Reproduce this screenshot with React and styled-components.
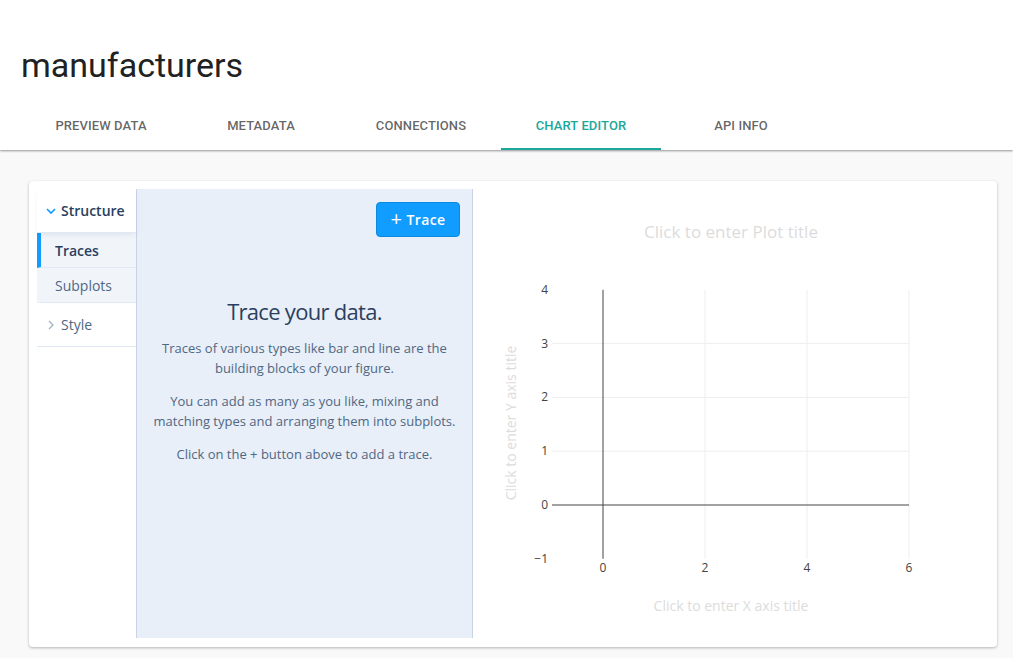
import React from "react";
import styled, { createGlobalStyle } from "styled-components";

const GlobalStyle = createGlobalStyle`
  html, body {
    margin: 0;
    padding: 0;
    background: #f9f9f9;
    font-family: Roboto, "Liberation Sans", sans-serif;
  }
  * {
    box-sizing: border-box;
  }
`;

const tabs = ["Preview Data", "Metadata", "Connections", "Chart Editor", "API Info"];
const activeTab = 3;

const App = () => {
  return (
    <Page>
      <GlobalStyle />
      <Header>
        <Title>manufacturers</Title>
        <TabBar>
          {tabs.map((t, i) => (
            <Tab key={t} $active={i === activeTab}>
              {t}
            </Tab>
          ))}
        </TabBar>
      </Header>
      <Content>
        <Card>
          <Sidebar>
            <GroupHeader $open>
              <svg width="12" height="8" viewBox="0 0 12 8">
                <polyline
                  points="2,2 6,6 10,2"
                  fill="none"
                  stroke="#119dff"
                  strokeWidth="1.7"
                />
              </svg>
              Structure
            </GroupHeader>
            <NavItem $active>Traces</NavItem>
            <NavItem>Subplots</NavItem>
            <GroupHeader>
              <svg width="12" height="12" viewBox="0 0 12 12">
                <polyline
                  points="4,2 8,6 4,10"
                  fill="none"
                  stroke="#a2b1c6"
                  strokeWidth="1.3"
                />
              </svg>
              Style
            </GroupHeader>
          </Sidebar>
          <Panel>
            <PanelTop>
              <AddButton>
                <span>+</span> Trace
              </AddButton>
            </PanelTop>
            <Empty>
              <EmptyTitle>Trace your data.</EmptyTitle>
              <EmptyText>
                Traces of various types like bar and line are the building
                blocks of your figure.
              </EmptyText>
              <EmptyText>
                You can add as many as you like, mixing and matching types and
                arranging them into subplots.
              </EmptyText>
              <EmptyText>Click on the + button above to add a trace.</EmptyText>
            </Empty>
          </Panel>
          <PlotArea>
            <Chart />
          </PlotArea>
        </Card>
      </Content>
    </Page>
  );
};

const xs = [0, 2, 4, 6];
const ys = [4, 3, 2, 1, 0, -1];
const xPos = (v) => 130 + v * 51;
const yPos = (v) => 316 - v * 53.8;

const Chart = () => (
  <svg width="516" height="449" viewBox="0 0 516 449">
    <g fontFamily="'Open Sans', sans-serif">
      <text x="258" y="49" textAnchor="middle" fontSize="17" fill="#dcdcdc">
        Click to enter Plot title
      </text>
      {[1, 2, 3].map((v) => (
        <line key={v} x1="79" x2="436" y1={yPos(v)} y2={yPos(v)} stroke="#eee" />
      ))}
      {[2, 4, 6].map((v) => (
        <line key={v} x1={xPos(v)} x2={xPos(v)} y1={yPos(4)} y2={yPos(-1)} stroke="#eee" />
      ))}
      <line x1={xPos(0)} x2={xPos(0)} y1={yPos(4)} y2={yPos(-1)} stroke="#444" />
      <line x1="79" x2="436" y1={yPos(0)} y2={yPos(0)} stroke="#444" />
      {ys.map((v) => (
        <text key={v} x="75" y={yPos(v) + 4} textAnchor="end" fontSize="12" fill="#444">
          {v < 0 ? "\u2212" + Math.abs(v) : v}
        </text>
      ))}
      {xs.map((v) => (
        <text key={v} x={xPos(v)} y="383" textAnchor="middle" fontSize="12" fill="#444">
          {v}
        </text>
      ))}
      <text x="258" y="422" textAnchor="middle" fontSize="14" fill="#dcdcdc">
        Click to enter X axis title
      </text>
      <text
        x="0"
        y="0"
        transform="translate(43 234) rotate(-90)"
        textAnchor="middle"
        fontSize="14"
        fill="#dcdcdc"
      >
        Click to enter Y axis title
      </text>
    </g>
  </svg>
);

const Page = styled.div`
  min-height: 658px;
  background: #f9f9f9;
`;

const Header = styled.header`
  background: #fff;
  box-shadow: 0 1px 2px rgba(0, 0, 0, 0.4);
  position: relative;
  z-index: 1;
`;

const Title = styled.h1`
  margin: 0;
  padding: 45px 21px 16px;
  font-size: 34px;
  font-weight: 400;
  line-height: 41px;
  color: #212121;
`;

const TabBar = styled.nav`
  display: flex;
  padding-left: 21px;
  height: 48px;
`;

const Tab = styled.div`
  width: 160px;
  display: flex;
  align-items: center;
  justify-content: center;
  padding-top: 1px;
  font-size: 13px;
  font-weight: 500;
  text-transform: uppercase;
  letter-spacing: 0.1px;
  color: ${(p) => (p.$active ? "#1ba89b" : "rgba(0, 0, 0, 0.62)")};
  border-bottom: 2px solid ${(p) => (p.$active ? "#1ba89b" : "transparent")};
`;

const Content = styled.main`
  padding: 31px 16px 11px 29px;
`;

const Card = styled.section`
  width: 968px;
  height: 466px;
  background: #fff;
  border-radius: 4px;
  box-shadow: 0 1px 3px rgba(0, 0, 0, 0.28);
  padding: 8px 8px 9px;
  display: flex;
  font-family: "Open Sans", sans-serif;
`;

const Sidebar = styled.aside`
  width: 99px;
  flex-shrink: 0;
  display: flex;
  flex-direction: column;
`;

const GroupHeader = styled.div`
  height: 44px;
  display: flex;
  align-items: center;
  gap: 4px;
  padding-left: 8px;
  font-size: 14px;
  font-weight: ${(p) => (p.$open ? 600 : 400)};
  color: ${(p) => (p.$open ? "#2a3f5f" : "#506784")};
  border-bottom: 1px solid #dfe8f3;
  box-shadow: ${(p) => (p.$open ? "0 3px 6px -2px rgba(42, 63, 95, 0.12)" : "none")};
  position: relative;
  z-index: ${(p) => (p.$open ? 1 : 0)};
`;

const NavItem = styled.div`
  height: 35px;
  display: flex;
  align-items: center;
  padding-left: 14px;
  font-size: 14px;
  background: #f1f5fa;
  border-bottom: 1px solid #dfe8f3;
  border-left: 4px solid ${(p) => (p.$active ? "#119dff" : "transparent")};
  font-weight: ${(p) => (p.$active ? 600 : 400)};
  color: ${(p) => (p.$active ? "#2a3f5f" : "#506784")};
`;

const Panel = styled.div`
  width: 337px;
  flex-shrink: 0;
  background: #e8eff8;
  border-left: 1px solid #c8d4e3;
  border-right: 1px solid #c8d4e3;
  display: flex;
  flex-direction: column;
`;

const PanelTop = styled.div`
  display: flex;
  justify-content: flex-end;
  padding: 13px 12px 0;
`;

const AddButton = styled.button`
  height: 35px;
  width: 84px;
  background: #119dff;
  border: 1px solid #0d89e0;
  border-radius: 4px;
  color: #fff;
  font-family: "Open Sans", sans-serif;
  font-size: 14px;
  font-weight: 600;
  letter-spacing: 0.4px;
  display: flex;
  align-items: center;
  justify-content: center;
  gap: 4px;
  padding: 0;

  span {
    font-size: 20px;
    font-weight: 400;
    line-height: 1;
    margin-top: -2px;
  }
`;

const Empty = styled.div`
  padding: 59px 10px 0;
  text-align: center;
`;

const EmptyTitle = styled.h2`
  margin: 0 0 12px;
  font-size: 22px;
  font-weight: 400;
  letter-spacing: -0.7px;
  line-height: 30px;
  color: #2a3f5f;
`;

const EmptyText = styled.p`
  margin: 0 0 13px;
  font-size: 13px;
  line-height: 20px;
  color: #506784;
`;

const PlotArea = styled.div`
  flex: 1;
  background: #fff;
`;

export default App;
